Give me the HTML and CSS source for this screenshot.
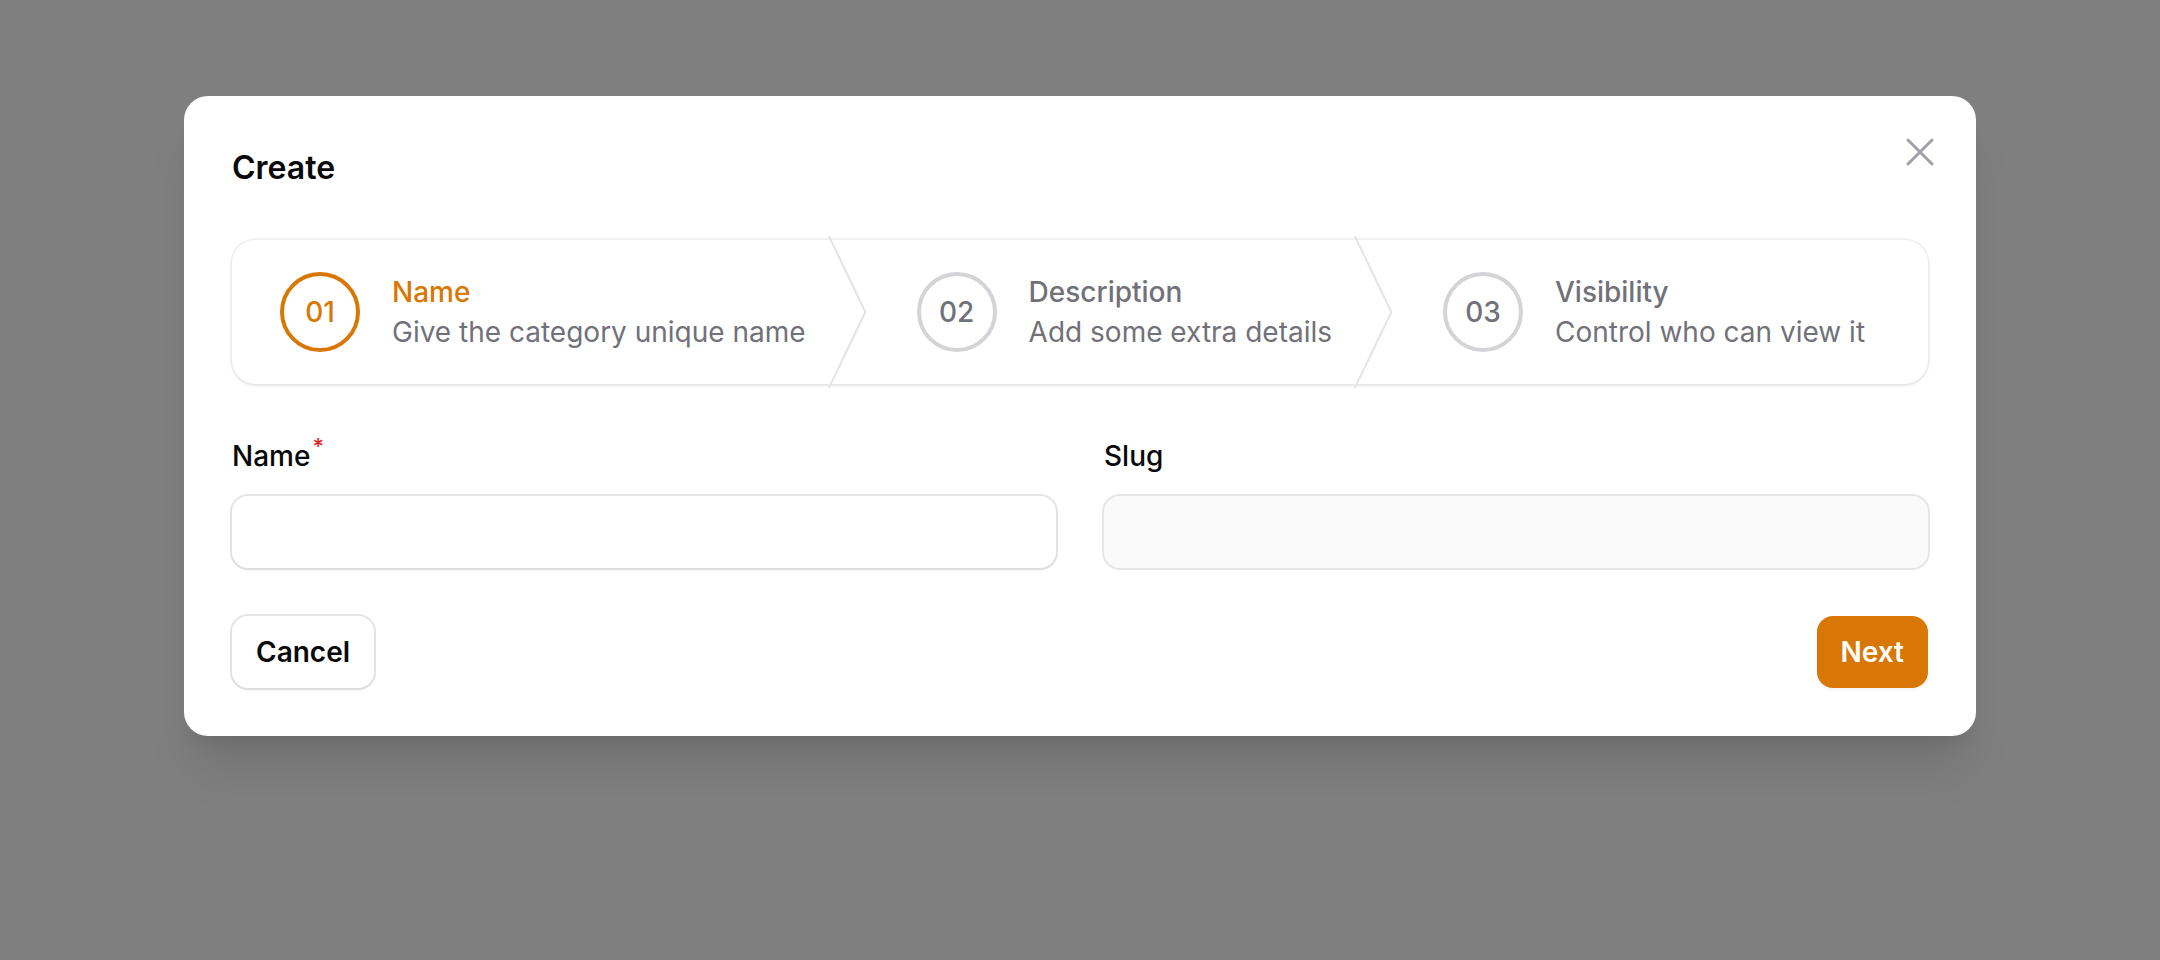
FILE: index.html
```html
<!DOCTYPE html>
<html lang="en">
<head>
<meta charset="utf-8">
<title>Create</title>
<link rel="stylesheet" href="styles.css">
</head>
<body>
<div class="overlay">
  <div class="modal">
    <button class="close" type="button" aria-label="Close">
      <svg viewBox="0 0 24 24" fill="none" stroke="currentColor" stroke-width="1.5" stroke-linecap="round" stroke-linejoin="round"><path d="M6 18 18 6M6 6l12 12"/></svg>
    </button>
    <h2 class="title">Create</h2>

    <ol class="wizard">
      <li class="step active">
        <span class="circle">01</span>
        <span class="step-text">
          <span class="step-label">Name</span>
          <span class="step-desc">Give the category unique name</span>
        </span>
        <svg class="chevron" viewBox="0 0 22 80" fill="none" preserveAspectRatio="none"><path d="M0 -2L20 40L0 82" stroke="currentColor" stroke-width="2" stroke-linejoin="round" vector-effect="non-scaling-stroke"/></svg>
      </li>
      <li class="step">
        <span class="circle">02</span>
        <span class="step-text">
          <span class="step-label">Description</span>
          <span class="step-desc">Add some extra details</span>
        </span>
        <svg class="chevron" viewBox="0 0 22 80" fill="none" preserveAspectRatio="none"><path d="M0 -2L20 40L0 82" stroke="currentColor" stroke-width="2" stroke-linejoin="round" vector-effect="non-scaling-stroke"/></svg>
      </li>
      <li class="step">
        <span class="circle">03</span>
        <span class="step-text">
          <span class="step-label">Visibility</span>
          <span class="step-desc">Control who can view it</span>
        </span>
      </li>
    </ol>

    <div class="fields">
      <div class="field">
        <label class="label">Name<sup class="req">*</sup></label>
        <div class="input"></div>
      </div>
      <div class="field">
        <label class="label">Slug</label>
        <div class="input disabled"></div>
      </div>
    </div>

    <div class="footer">
      <button class="btn btn-secondary" type="button">Cancel</button>
      <button class="btn btn-primary" type="button">Next</button>
    </div>
  </div>
</div>
</body>
</html>
```

FILE: styles.css
```css
* {
  box-sizing: border-box;
}

html, body {
  margin: 0;
  padding: 0;
}

body {
  background: #7f7f7f;
  font-family: Inter, "Noto Sans", "Liberation Sans", sans-serif;
  color: #09090b;
  width: 2160px;
  height: 960px;
  overflow: hidden;
}

.overlay {
  display: flex;
  justify-content: center;
  padding-top: 96px;
}

.modal {
  position: relative;
  width: 1792px;
  background: #ffffff;
  border-radius: 24px;
  padding: 48px;
  box-shadow: 0 40px 50px -10px rgba(0, 0, 0, 0.1), 0 16px 20px -12px rgba(0, 0, 0, 0.1);
}

.close {
  position: absolute;
  top: 32px;
  right: 32px;
  width: 48px;
  height: 48px;
  padding: 0;
  border: 0;
  background: transparent;
  color: #a1a1aa;
  display: flex;
}

.close svg {
  width: 48px;
  height: 48px;
}

.title {
  margin: 0;
  font-size: 32px;
  line-height: 48px;
  font-weight: 600;
  color: #09090b;
}

.wizard {
  margin: 48px 0 0;
  padding: 0;
  list-style: none;
  display: grid;
  grid-auto-flow: column;
  border-radius: 24px;
  box-shadow: 0 0 0 2px rgba(9, 9, 11, 0.05), 0 2px 4px 0 rgba(0, 0, 0, 0.05);
  background: #ffffff;
}

.step {
  position: relative;
  display: flex;
  align-items: center;
  gap: 32px;
  padding: 32px 48px;
}

.circle {
  flex: none;
  width: 80px;
  height: 80px;
  border-radius: 50%;
  border: 4px solid #d4d4d8;
  display: flex;
  align-items: center;
  justify-content: center;
  font-size: 28px;
  font-weight: 500;
  color: #71717a;
}

.step-text {
  display: flex;
  flex-direction: column;
  font-size: 28px;
  line-height: 40px;
  white-space: nowrap;
}

.step-label {
  font-weight: 500;
  color: #71717a;
}

.step-desc {
  color: #71717a;
}

.step.active .circle {
  border-color: #d97706;
  color: #d97706;
}

.step.active .step-label {
  color: #d97706;
}

.chevron {
  position: absolute;
  right: 0;
  top: 0;
  width: 40px;
  height: 100%;
  color: #e4e4e7;
  overflow: visible;
}

.fields {
  margin-top: 48px;
  display: grid;
  grid-template-columns: 1fr 1fr;
  gap: 48px;
}

.field {
  display: flex;
  flex-direction: column;
  gap: 16px;
}

.label {
  font-size: 28px;
  line-height: 48px;
  font-weight: 500;
  color: #09090b;
}

.req {
  color: #dc2626;
  font-weight: 500;
  font-size: 22px;
  line-height: 0;
  margin-left: 2px;
  position: relative;
  top: -2px;
}

.input {
  height: 72px;
  border-radius: 16px;
  background: #ffffff;
  box-shadow: 0 0 0 2px rgba(9, 9, 11, 0.1), 0 2px 4px 0 rgba(0, 0, 0, 0.05);
}

.input.disabled {
  background: #fafafa;
  box-shadow: 0 0 0 2px rgba(9, 9, 11, 0.1);
}

.footer {
  margin-top: 48px;
  display: flex;
  justify-content: space-between;
  align-items: center;
}

.btn {
  height: 72px;
  padding: 0 24px;
  border: 0;
  border-radius: 16px;
  font-family: Inter, "Noto Sans", "Liberation Sans", sans-serif;
  font-size: 28px;
  font-weight: 600;
  line-height: 40px;
}

.btn-secondary {
  background: #ffffff;
  color: #09090b;
  box-shadow: 0 0 0 2px rgba(9, 9, 11, 0.1), 0 2px 4px 0 rgba(0, 0, 0, 0.05);
}

.btn-primary {
  background: #d97706;
  color: #ffffff;
  box-shadow: 0 2px 4px 0 rgba(0, 0, 0, 0.05);
}
```
